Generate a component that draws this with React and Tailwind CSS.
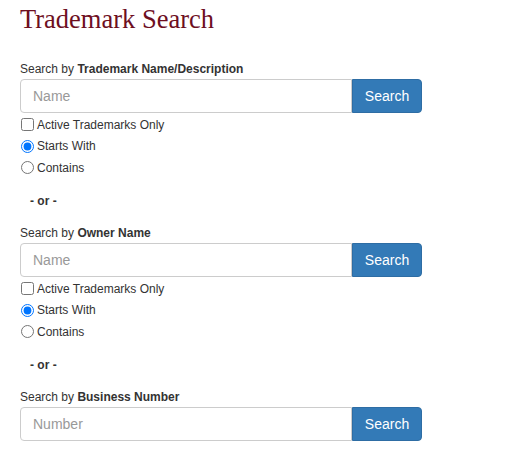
import { useState } from 'react'

function SearchSection({ label, placeholder, options }) {
  const [mode, setMode] = useState('starts')
  return (
    <div>
      <div className="h-[17px] text-[12px] leading-[17px] text-[#333]">
        Search by <span className="font-bold">{label}</span>
      </div>
      <div className="mt-[1px] flex h-[34px] w-[402px]">
        <input
          type="text"
          placeholder={placeholder}
          className="h-full w-[332px] rounded-l-[4px] border border-[#ccc] px-3 text-[14px] text-[#555] placeholder-[#999] outline-none"
        />
        <button className="h-full w-[70px] rounded-r-[4px] border border-[#2e6da4] bg-[#337ab7] text-[14px] text-white">
          Search
        </button>
      </div>
      {options && (
        <div className="text-[12px] text-[#333]">
          <label className="flex h-[22px] items-center pt-[1px]">
            <input type="checkbox" className="ml-[1px] mr-[3px] h-[13px] w-[13px]" />
            Active Trademarks Only
          </label>
          <label className="flex h-[22px] items-center">
            <input
              type="radio"
              checked={mode === 'starts'}
              onChange={() => setMode('starts')}
              className="ml-[1px] mr-[3px] h-[13px] w-[13px]"
            />
            Starts With
          </label>
          <label className="flex h-[21px] items-center">
            <input
              type="radio"
              checked={mode === 'contains'}
              onChange={() => setMode('contains')}
              className="ml-[1px] mr-[3px] h-[13px] w-[13px]"
            />
            Contains
          </label>
          <div className="mt-[15px] mb-[15px] h-[17px] pl-[10px] font-bold leading-[17px]">- or -</div>
        </div>
      )}
    </div>
  )
}

export default function App() {
  return (
    <div className="min-h-[470px] bg-white px-5 font-['Liberation_Sans',Arial,sans-serif]">
      <h1 className="pt-[4px] h-[34px] font-['Liberation_Serif',Georgia,serif] text-[26.5px] leading-[30px] text-[#6e0f1f]">
        Trademark Search
      </h1>
      <div className="mt-[27px]">
        <SearchSection label="Trademark Name/Description" placeholder="Name" options />
        <SearchSection label="Owner Name" placeholder="Name" options />
        <SearchSection label="Business Number" placeholder="Number" />
      </div>
    </div>
  )
}
